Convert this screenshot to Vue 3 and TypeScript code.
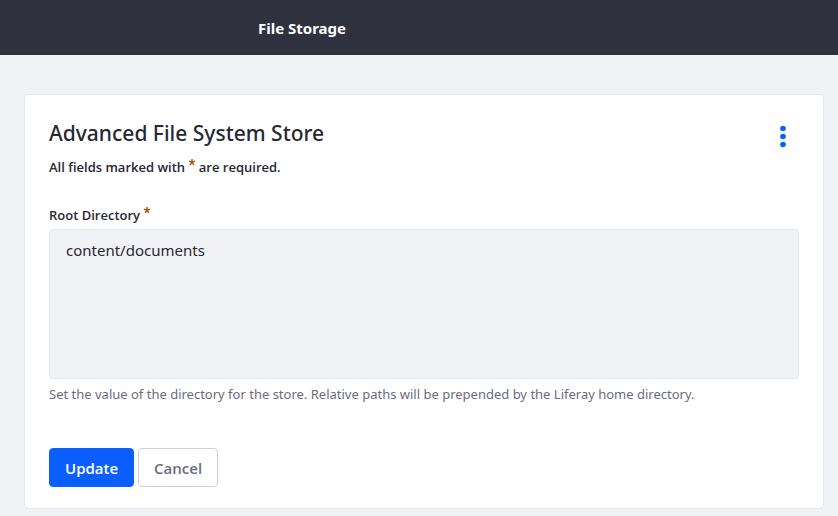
<script setup lang="ts">
import { ref } from 'vue'

const rootDirectory = ref<string>('content/documents')
</script>

<template>
  <header class="bar"><h1 class="bar-title">File Storage</h1></header>
  <main class="page">
    <form class="sheet" @submit.prevent>
      <div class="sheet-head">
        <div>
          <h2 class="title">Advanced File System Store</h2>
          <p class="note">
            All fields marked with
            <svg class="star" viewBox="0 0 6 6"><path d="M3 3.2V0M3 3.2L0 2.2M3 3.2L6 2.2M3 3.2L1.2 5.8M3 3.2L4.8 5.8" /></svg>
            are required.
          </p>
        </div>
        <button class="menu" type="button" aria-label="Options">
          <svg viewBox="0 0 16 22"><circle cx="8" cy="2.5" r="2.8" /><circle cx="8" cy="10.5" r="2.8" /><circle cx="8" cy="18.5" r="2.8" /></svg>
        </button>
      </div>
      <label class="label" for="root-dir">
        Root Directory
        <svg class="star" viewBox="0 0 6 6"><path d="M3 3.2V0M3 3.2L0 2.2M3 3.2L6 2.2M3 3.2L1.2 5.8M3 3.2L4.8 5.8" /></svg>
      </label>
      <textarea id="root-dir" v-model="rootDirectory" class="field" spellcheck="false"></textarea>
      <p class="help">Set the value of the directory for the store. Relative paths will be prepended by the Liferay home directory.</p>
      <div class="actions">
        <button class="btn primary" type="submit">Update</button>
        <button class="btn secondary" type="button">Cancel</button>
      </div>
    </form>
  </main>
</template>

<style>
body {
  background: #f1f2f5;
}
</style>

<style scoped>
* {
  box-sizing: border-box;
  margin: 0;
  font-family: "Noto Sans", "Open Sans", sans-serif;
}
.bar {
  display: flex;
  justify-content: center;
  background: #30313f;
  padding: 16px 234px 15px 0;
}
.bar-title {
  color: #fff;
  font-size: 15px;
  line-height: 24px;
  font-weight: 700;
}
.page {
  padding: 39px 14px 7px 24px;
}
.sheet {
  background: #fff;
  border: 1px solid #e7e7ed;
  border-radius: 4px;
  padding: 24px 24px 21px;
}
.sheet-head {
  display: flex;
  justify-content: space-between;
  align-items: flex-start;
}
.title {
  color: #272833;
  font-size: 21px;
  line-height: 28px;
  font-weight: 500;
}
.note,
.label {
  display: block;
  color: #272833;
  font-family: "Open Sans", "Noto Sans", sans-serif;
  font-size: 13px;
  line-height: 20px;
  font-weight: 600;
}
.note {
  margin-top: 10px;
}
.label {
  margin-top: 28px;
}
.star {
  width: 6px;
  height: 6px;
  margin: 0 0 0 1px;
  vertical-align: 7px;
  overflow: visible;
  fill: none;
  stroke: #b95000;
  stroke-width: 1.4;
}
.menu {
  width: 32px;
  height: 32px;
  margin-top: 1px;
  padding: 6px 8px 4px;
  border: 0;
  background: none;
}
.menu svg {
  display: block;
  width: 16px;
  height: 22px;
  overflow: visible;
  fill: #0b5fff;
}
.field {
  display: block;
  width: 100%;
  height: 150px;
  margin-top: 4px;
  padding: 8px 16px;
  border: 1px solid #e7e7ed;
  border-radius: 4px;
  background: #f1f2f5;
  color: #272833;
  font-size: 15px;
  line-height: 24px;
  resize: none;
}
.help {
  margin-top: 5px;
  color: #6b6c7e;
  font-size: 13px;
  line-height: 20px;
}
.actions {
  display: flex;
  gap: 4px;
  margin-top: 44px;
}
.btn {
  height: 39px;
  padding: 0 15px;
  border: 1px solid;
  border-radius: 4px;
  font-family: "Open Sans", "Noto Sans", sans-serif;
  font-size: 15px;
  line-height: 24px;
  font-weight: 600;
}
.primary {
  background: #0b5fff;
  border-color: #0b5fff;
  color: #fff;
}
.secondary {
  background: #fff;
  border-color: #cdced9;
  color: #6b6c7e;
}
</style>
